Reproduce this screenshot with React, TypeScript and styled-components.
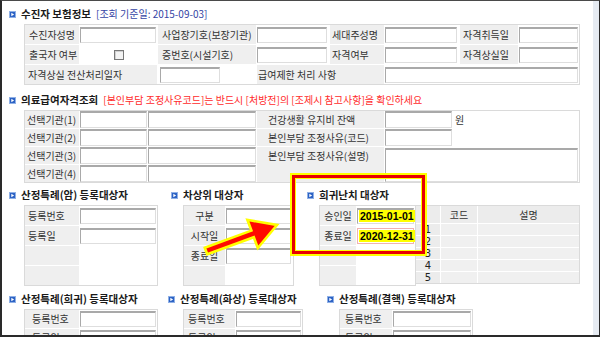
import React from 'react';
import styled, { createGlobalStyle } from 'styled-components';

const Global = createGlobalStyle`
  html, body { margin: 0; padding: 0; background: #fff; }
  body { font-family: "Noto Sans CJK KR", "Noto Sans", sans-serif; }
  * { box-sizing: border-box; }
`;

const Frame = styled.div`
  position: relative;
  width: 600px;
  height: 337px;
  border-left: 2px solid #2a2a2a;
  border-top: 1px solid #4a4a4a;
  border-right: 1px solid #2a2a2a;
  border-bottom: 2px solid #2a2a2a;
  display: flex;
  overflow: hidden;
  background: #fff;
`;

const Content = styled.div`
  flex: 1;
  min-width: 0;
  padding: 6px 0 0 7px;
  display: flex;
  flex-direction: column;
`;

const Strip = styled.div`
  width: 6px;
  background: #e6ebf2;
`;

const Section = styled.div<{ $mt?: number }>`
  margin-top: ${p => p.$mt ?? 0}px;
  display: flex;
  flex-direction: column;
`;

const Columns = styled.div`
  display: flex;
  align-items: flex-start;
`;

const Block = styled.div<{ $w?: number }>`
  ${p => (p.$w ? `width: ${p.$w}px; flex: none;` : 'flex: 1;')}
  display: flex;
  flex-direction: column;
`;

const TitleRow = styled.div`
  display: flex;
  align-items: center;
  height: 14px;
  margin-bottom: 3px;
  white-space: nowrap;
`;

const TitleText = styled.span`
  font-size: 10.5px;
  line-height: 14px;
  font-weight: 700;
  color: #1a1a1a;
  margin-left: 5px;
`;

const Note = styled.span<{ $color: string }>`
  font-size: 10px;
  line-height: 14px;
  color: ${p => p.$color};
  margin-left: 5px;
`;

const Table = styled.div<{ $cols: string; $row: number; $ml?: number }>`
  display: grid;
  grid-template-columns: ${p => p.$cols};
  grid-auto-rows: ${p => p.$row}px;
  gap: 1px;
  background: #fff;
  border: 1px solid #dadada;
  margin-left: ${p => p.$ml ?? 15}px;
  width: fit-content;
`;

const Pair = styled.div<{ $ml?: number }>`
  display: flex;
  align-items: flex-start;
  margin-left: ${p => p.$ml ?? 12}px;
`;

const DataGrid = styled.div`
  display: grid;
  grid-template-columns: 24px 36px 101px;
  grid-template-rows: 17px repeat(5, 11px);
  gap: 1px;
  background: #fff;
  border: 1px solid #dadada;
  border-left: none;
`;

const GridHead = styled.div`
  background: #ececec;
  color: #333;
  font-size: 10px;
  line-height: 12px;
  display: flex;
  align-items: center;
  justify-content: center;
`;

const GridCell = styled.div<{ $num?: boolean }>`
  background: ${p => (p.$num ? '#ececec' : '#f0f0f0')};
  color: #222;
  font-family: "DejaVu Sans", "Liberation Sans", sans-serif;
  font-size: 10px;
  line-height: 11px;
  display: flex;
  align-items: center;
  justify-content: center;
  overflow: visible;
`;

type CellProps = {
  $align?: 'left' | 'center';
  $pad?: number;
  $top?: boolean;
  $span?: number;
  $rows?: number;
};

const Label = styled.div<CellProps>`
  background: #efefef;
  color: #333;
  font-size: 10px;
  line-height: 12px;
  display: flex;
  align-items: ${p => (p.$top ? 'flex-start' : 'center')};
  justify-content: ${p => (p.$align === 'center' ? 'center' : 'flex-start')};
  padding-left: ${p => (p.$align === 'center' ? 0 : p.$pad ?? 4)}px;
  padding-top: ${p => (p.$top ? 3 : 0)}px;
  grid-column: span ${p => p.$span ?? 1};
  grid-row: span ${p => p.$rows ?? 1};
  white-space: nowrap;
  overflow: hidden;
`;

const Value = styled.div<CellProps>`
  background: #fff;
  color: #333;
  font-size: 10px;
  line-height: 12px;
  display: flex;
  align-items: ${p => (p.$top ? 'flex-start' : 'center')};
  justify-content: ${p => (p.$align === 'center' ? 'center' : 'flex-start')};
  padding-left: ${p => p.$pad ?? 0}px;
  padding-top: ${p => (p.$top ? 1 : 0)}px;
  grid-column: span ${p => p.$span ?? 1};
  grid-row: span ${p => p.$rows ?? 1};
  white-space: nowrap;
`;

const Field = styled.div<{ $w: number; $h?: number; $pink?: boolean }>`
  flex: none;
  width: ${p => p.$w}px;
  height: ${p => p.$h ?? 16}px;
  background: #fff;
  border-style: solid;
  border-width: ${p => (p.$pink ? '1px' : '2px 1px 1px 1px')};
  border-color: ${p => (p.$pink ? '#f0b2b2' : '#a9a9a9 #dedede #dedede #a9a9a9')};
  display: flex;
  align-items: center;
  padding-left: 1px;
`;

const Unit = styled.span`
  margin-left: 3px;
  color: #333;
`;

const Check = styled.span`
  width: 10px;
  height: 10px;
  border: 1px solid #777;
  background: #f3f3f3;
  box-shadow: inset 1px 1px 0 #d0d0d0;
`;

const Marked = styled.span`
  font-family: "Liberation Sans", Arial, sans-serif;
  font-weight: 700;
  font-size: 10.5px;
  line-height: 12px;
  color: #000;
  background: #ffff00;
  padding: 0 1px;
`;

const HighlightBox = styled.div`
  position: absolute;
  left: 290px;
  top: 174px;
  width: 133px;
  height: 79px;
  border: 3px solid #e80000;
  box-shadow: 0 0 0 2px #ffff00, inset 0 0 0 1px #ffff00;
  pointer-events: none;
`;

const ArrowSvg = styled.svg`
  position: absolute;
  left: 193px;
  top: 209px;
  width: 90px;
  height: 52px;
  overflow: visible;
  pointer-events: none;
`;

const Bullet = () => (
  <svg width="7" height="7" viewBox="0 0 7 7">
    <rect x="0.5" y="0.5" width="6" height="6" fill="#2c62c4" stroke="#8fb0e6" />
    <path d="M2.3 1.7 L5.1 3.5 L2.3 5.3 Z" fill="#ffffff" />
  </svg>
);

const Title: React.FC<{ text: string; note?: string; noteColor?: string }> = ({ text, note, noteColor }) => (
  <TitleRow>
    <Bullet />
    <TitleText>{text}</TitleText>
    {note && <Note $color={noteColor ?? '#333'}>{note}</Note>}
  </TitleRow>
);

const Arrow = () => (
  <ArrowSvg viewBox="195 210 90 52">
    <polygon
      points="204.8,247.7 251.4,230.6 247.4,219.8 277,225 257.8,248 253.8,237.2 207.2,254.3"
      fill="#ff0a00"
      stroke="#ffff00"
      strokeWidth="2.6"
      strokeLinejoin="miter"
    />
  </ArrowSvg>
);

export default function App() {
  return (
    <>
      <Global />
      <Frame>
        <Content>
          <Section>
            <Title text="수진자 보험정보" note="[조회 기준일: 2015-09-03]" noteColor="#3444a4" />
            <Table $cols="54px 77px 98px 72px 54px 74px 58px 60px" $row={19}>
              <Label>수진자성명</Label>
              <Value><Field $w={76} /></Value>
              <Label>사업장기호(보장기관)</Label>
              <Value><Field $w={70} /></Value>
              <Label $pad={2}>세대주성명</Label>
              <Value><Field $w={72} /></Value>
              <Label $pad={3}>자격취득일</Label>
              <Value><Field $w={59} /></Value>

              <Label>출국자 여부</Label>
              <Value $align="center"><Check /></Value>
              <Label>증번호(시설기호)</Label>
              <Value><Field $w={70} /></Value>
              <Label $pad={2}>자격여부</Label>
              <Value><Field $w={72} /></Value>
              <Label $pad={3}>자격상실일</Label>
              <Value><Field $w={59} /></Value>

              <Label $span={2} $pad={3}>자격상실 전산처리일자</Label>
              <Value $pad={2}><Field $w={60} /></Value>
              <Label $span={2} $pad={1}>급여제한 처리 사항</Label>
              <Value $span={3}><Field $w={193} /></Value>
            </Table>
          </Section>

          <Section $mt={8}>
            <Title
              text="의료급여자격조회"
              note="[본인부담 조정사유코드]는 반드시 [처방전]의 [조제시 참고사항]을 확인하세요"
              noteColor="#ff2b2b"
            />
            <Table $cols="54px 67px 108px 127px 194px" $row={17}>
              <Label $pad={2}>선택기관(1)</Label>
              <Value><Field $w={67} $h={17} /></Value>
              <Value><Field $w={108} $h={17} /></Value>
              <Label $pad={11}>건강생활 유지비 잔액</Label>
              <Value><Field $w={67} $h={17} /><Unit>원</Unit></Value>

              <Label $pad={2}>선택기관(2)</Label>
              <Value><Field $w={67} $h={17} /></Value>
              <Value><Field $w={108} $h={17} /></Value>
              <Label $pad={11}>본인부담 조정사유(코드)</Label>
              <Value><Field $w={67} $h={17} /></Value>

              <Label $pad={2}>선택기관(3)</Label>
              <Value><Field $w={67} $h={17} /></Value>
              <Value><Field $w={108} $h={17} /></Value>
              <Label $pad={11} $rows={2} $top>본인부담 조정사유(설명)</Label>
              <Value $rows={2} $top><Field $w={193} $h={34} /></Value>

              <Label $pad={2}>선택기관(4)</Label>
              <Value><Field $w={67} $h={17} /></Value>
              <Value><Field $w={108} $h={17} /></Value>
            </Table>
          </Section>

          <Section $mt={5}>
            <Columns>
              <Block $w={162}>
                <Title text="산정특례(암) 등록대상자" />
                <Table $cols="54px 77px" $row={19}>
                  <Label $pad={3}>등록번호</Label>
                  <Value><Field $w={76} /></Value>
                  <Label $pad={3}>등록일</Label>
                  <Value><Field $w={76} /></Value>
                  <Label />
                  <Value />
                  <Label />
                  <Value />
                </Table>
              </Block>
              <Block $w={136}>
                <Title text="차상위 대상자" />
                <Table $cols="41px 67px" $row={19} $ml={12}>
                  <Label $align="center">구분</Label>
                  <Value><Field $w={65} /></Value>
                  <Label $align="center">시작일</Label>
                  <Value><Field $w={65} /></Value>
                  <Label $align="center">종료일</Label>
                  <Value><Field $w={65} /></Value>
                  <Label />
                  <Value />
                </Table>
              </Block>
              <Block>
                <Title text="희귀난치 대상자" />
                <Pair $ml={12}>
                  <Table $cols="36px 58px" $row={19} $ml={0}>
                    <Label $align="center">승인일</Label>
                    <Value><Field $w={57}><Marked>2015-01-01</Marked></Field></Value>
                    <Label $align="center">종료일</Label>
                    <Value><Field $w={57} $pink><Marked>2020-12-31</Marked></Field></Value>
                    <Label />
                    <Value />
                    <Label />
                    <Value />
                  </Table>
                  <DataGrid>
                    <GridHead />
                    <GridHead>코드</GridHead>
                    <GridHead>설명</GridHead>
                    {[1, 2, 3, 4, 5].map(n => (
                      <React.Fragment key={n}>
                        <GridCell $num>{n}</GridCell>
                        <GridCell />
                        <GridCell />
                      </React.Fragment>
                    ))}
                  </DataGrid>
                </Pair>
              </Block>
            </Columns>
          </Section>

          <Section $mt={6}>
            <Columns>
              <Block $w={159}>
                <Title text="산정특례(희귀) 등록대상자" />
                <Table $cols="54px 77px" $row={18}>
                  <Label $pad={7}>등록번호</Label>
                  <Value><Field $w={76} /></Value>
                  <Label $pad={7}>등록일</Label>
                  <Value><Field $w={76} /></Value>
                </Table>
              </Block>
              <Block $w={159}>
                <Title text="산정특례(화상) 등록대상자" />
                <Table $cols="51px 66px" $row={18}>
                  <Label $pad={4}>등록번호</Label>
                  <Value><Field $w={65} /></Value>
                  <Label $pad={4}>등록일</Label>
                  <Value><Field $w={65} /></Value>
                </Table>
              </Block>
              <Block>
                <Title text="산정특례(결핵) 등록대상자" />
                <Table $cols="52px 79px" $row={18} $ml={12}>
                  <Label $pad={5}>등록번호</Label>
                  <Value><Field $w={78} /></Value>
                  <Label $pad={5}>등록일</Label>
                  <Value><Field $w={78} /></Value>
                </Table>
              </Block>
            </Columns>
          </Section>
        </Content>
        <Strip />
        <HighlightBox />
        <Arrow />
      </Frame>
    </>
  );
}
